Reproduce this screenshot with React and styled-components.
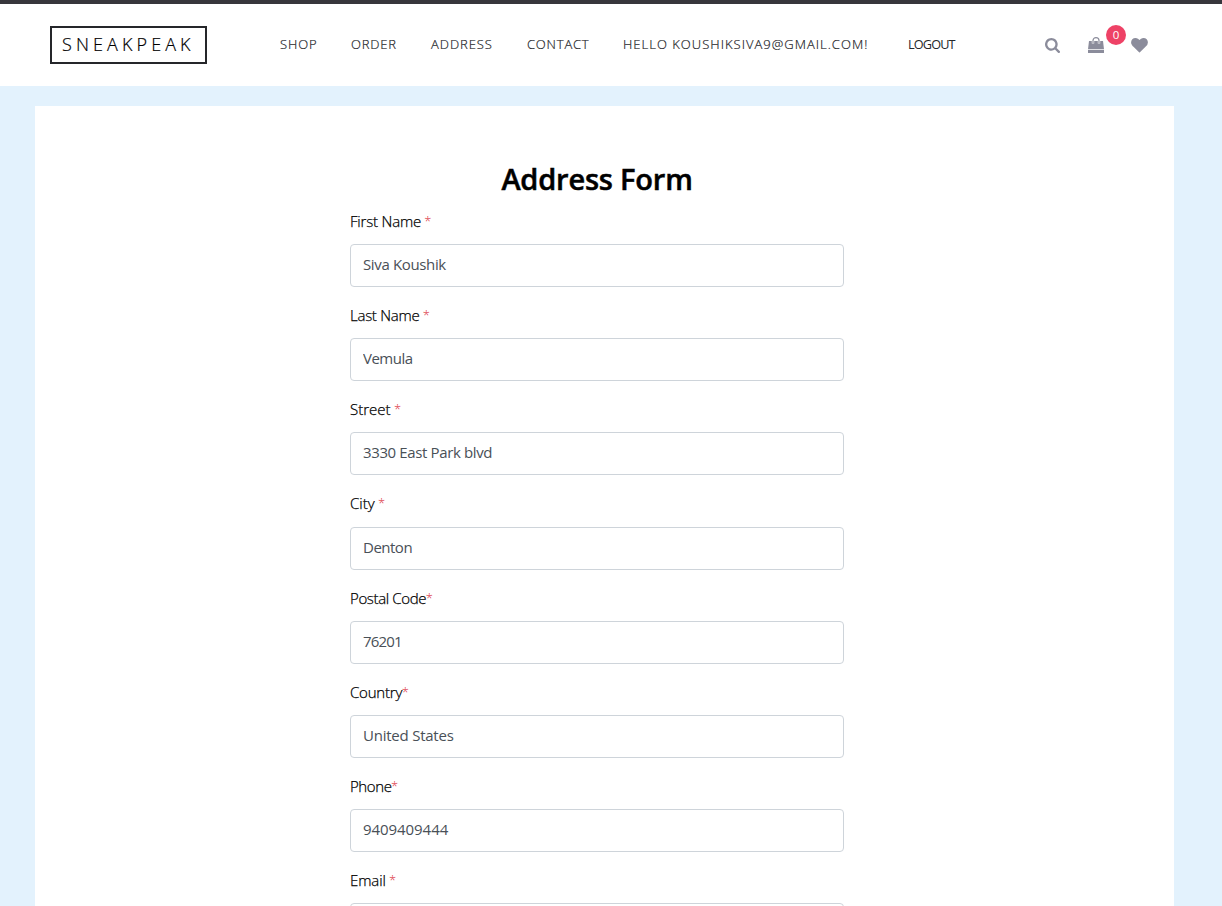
import React from "react";
import styled, { createGlobalStyle } from "styled-components";

const GlobalStyle = createGlobalStyle`
  *, *::before, *::after { box-sizing: border-box; }
  body {
    margin: 0;
    background: #e3f2fd;
    color: #000;
    font-family: "Open Sans", "Noto Sans", sans-serif;
    font-size: 15px;
    font-weight: 300;
    line-height: 1.7;
  }
`;

const Page = styled.div`
  height: 906px;
  overflow: hidden;
`;

const Header = styled.header`
  display: flex;
  align-items: flex-start;
  height: 86px;
  padding: 22px 74px 0 50px;
  border-top: 4px solid #37363c;
  background: #fff;
`;

const Logo = styled.a`
  width: 157px;
  height: 38px;
  padding-left: 10px;
  border: 2px solid #25262a;
  font-size: 18px;
  line-height: 33px;
  letter-spacing: ${(p) => p.$spacing};
  white-space: nowrap;
  -webkit-text-stroke: 0.2px currentColor;
`;

const Nav = styled.nav`
  display: flex;
  flex: 1;
  margin-left: 73px;
`;

const NavLink = styled.a`
  flex: none;
  width: ${(p) => p.$width}px;
  color: #25262a;
  font-size: ${(p) => p.$size || 13}px;
  font-weight: ${(p) => p.$weight || 300};
  line-height: 37px;
  letter-spacing: ${(p) => p.$spacing}px;
  white-space: nowrap;
  -webkit-text-stroke: ${(p) => (p.$weight ? 0 : 0.2)}px currentColor;
`;

const Actions = styled.div`
  display: flex;
  align-items: center;
  height: 38px;
  color: #8b8c9b;

  svg { display: block; fill: currentColor; }
`;

const Cart = styled.a`
  position: relative;
  margin: 0 27px 0 28px;
`;

const Badge = styled.span`
  position: absolute;
  top: -12px;
  left: 18px;
  width: 20px;
  height: 20px;
  border-radius: 50%;
  background: #ee4266;
  color: #fff;
  font-size: 11.5px;
  font-weight: 400;
  line-height: 20px;
  text-align: center;
`;

const Panel = styled.main`
  width: 1139px;
  height: 900px;
  margin: 20px 0 0 35px;
  padding: 50px 330px 0 315px;
  background: #fff;
`;

const Title = styled.h2`
  margin: 0;
  height: 52.8px;
  font-size: 29px;
  font-weight: 600;
  line-height: 46px;
  letter-spacing: ${(p) => p.$spacing}px;
  text-align: center;
  white-space: nowrap;
  -webkit-text-stroke: 0.5px currentColor;
`;

const Field = styled.div`
  margin-bottom: 16px;
`;

const Label = styled.label`
  display: block;
  height: 27.2px;
  margin-bottom: 8px;
  line-height: 25.2px;
  letter-spacing: ${(p) => p.$spacing}px;
  white-space: pre;
  -webkit-text-stroke: 0.25px currentColor;
`;

const Required = styled.span`
  margin-left: -0.5px;
  color: #dc3545;
  font-size: 13px;
  line-height: 1;
  vertical-align: 1px;
  -webkit-text-stroke: 0;
`;

const Input = styled.input`
  display: block;
  width: 100%;
  height: 43px;
  padding: 0 12px 2.8px;
  border: 1px solid #ced4da;
  border-radius: 4px;
  background: #fff;
  color: #495057;
  font: 400 15px "Open Sans", "Noto Sans", sans-serif;
  letter-spacing: ${(p) => p.$spacing}px;
  outline: none;
`;

const links = [
  { text: "SHOP", width: 71, spacing: 0.85 },
  { text: "ORDER", width: 80, spacing: 0.8 },
  { text: "ADDRESS", width: 96, spacing: 0.95 },
  { text: "CONTACT", width: 96, spacing: 0.8 },
  { text: "HELLO KOUSHIKSIVA9@GMAIL.COM!", width: 285, spacing: 1.02 },
  { text: "LOGOUT", width: 50, spacing: -0.85, weight: 400, size: 12.7 },
];

const fields = [
  { label: "First Name ", value: "Siva Koushik", ls: -0.18, vs: -0.36 },
  { label: "Last Name ", value: "Vemula", ls: -0.25, vs: -0.5 },
  { label: "Street ", value: "3330 East Park blvd", ls: 0, vs: -0.37 },
  { label: "City ", value: "Denton", ls: 0, vs: -0.5 },
  { label: "Postal Code", value: "76201", ls: -0.35, vs: -0.8 },
  { label: "Country", value: "United States", ls: -0.2, vs: -0.23 },
  { label: "Phone", value: "9409409444", ls: -0.4, vs: -0.06 },
  { label: "Email ", value: "", ls: -0.1, vs: 0 },
];

const SearchIcon = () => (
  <svg width="15" height="15" viewBox="0 0 1664 1664">
    <path d="M1152 704q0-185-131.500-316.500T704 256 387.500 387.500 256 704t131.500 316.500T704 1152t316.500-131.500T1152 704zm512 832q0 52-38 90t-90 38q-54 0-90-38l-343-342q-179 124-399 124-143 0-273.500-55.500t-225-150-150-225T0 704t55.500-273.500 150-225 225-150T704 0t273.500 55.500 225 150 150 225T1408 704q0 220-124 399l343 343q37 37 37 90z" />
  </svg>
);

const BagIcon = () => (
  <svg width="16" height="16" viewBox="0 0 16 16">
    <path d="M1 4h14l1 8.200H0zM0 13h16v3H0z" />
    <path d="M5 6.500V3.500a3 3 0 0 1 6 0v3" fill="none" stroke="#fff" strokeWidth="2.400" />
    <path d="M5 6.300V3.600a3 3 0 0 1 6 0v2.700" fill="none" stroke="#8b8c9b" strokeWidth="1.200" />
  </svg>
);

const HeartIcon = () => (
  <svg width="17" height="15" viewBox="0 0 1792 1600">
    <path d="M896 1536q-26 0-44-18L228 916q-10-8-27.500-26T145 824.500 77 727 23.500 606 0 468q0-220 127-344T478 0q62 0 126.500 21.500t120 58T820 148t76 68q36-36 76-68t95.500-68.500 120-58T1314 0q224 0 351 124t127 344q0 221-229 450l-623 600q-18 18-44 18z" />
  </svg>
);

export default function App() {
  return (
    <Page>
      <GlobalStyle />
      <Header>
        <Logo $spacing="4.1px">SNEAKPEAK</Logo>
        <Nav>
          {links.map((l) => (
            <NavLink key={l.text} $width={l.width} $spacing={l.spacing} $weight={l.weight} $size={l.size}>
              {l.text}
            </NavLink>
          ))}
        </Nav>
        <Actions>
          <SearchIcon />
          <Cart>
            <BagIcon />
            <Badge>0</Badge>
          </Cart>
          <HeartIcon />
        </Actions>
      </Header>
      <Panel>
        <Title $spacing={-0.2}>Address Form</Title>
        {fields.map((f) => (
          <Field key={f.label}>
            <Label $spacing={f.ls}>
              {f.label}
              <Required>*</Required>
            </Label>
            <Input defaultValue={f.value} $spacing={f.vs} />
          </Field>
        ))}
      </Panel>
    </Page>
  );
}
